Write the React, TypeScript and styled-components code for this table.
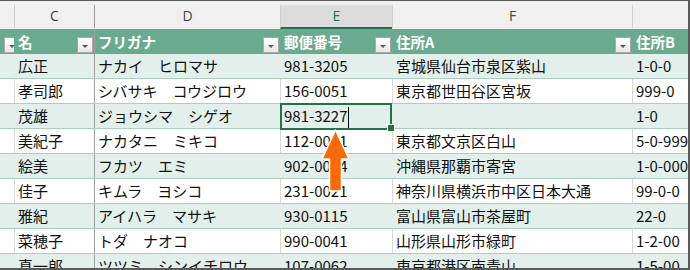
import React from "react";
import styled, { createGlobalStyle } from "styled-components";

const Global = createGlobalStyle`
  html, body { margin: 0; padding: 0; background: #ffffff; }
  * { box-sizing: border-box; }
`;

const COLS = "14px 80px 186px 112px 240px 1fr";
const JP = `"Noto Sans CJK JP", "Noto Sans", sans-serif`;

const Frame = styled.div`
  width: 690px;
  height: 270px;
  overflow: hidden;
  position: relative;
  border-top: 1px solid #5a5a5a;
  border-right: 2px solid #5a5a5a;
  border-bottom: 2px solid #5a5a5a;
  background: #ffffff;
  font-family: ${JP};
`;

const LetterRow = styled.div`
  display: grid;
  grid-template-columns: ${COLS};
  height: 28px;
  padding-top: 4px;
  background: #f0f0f0;
`;

const Letter = styled.div<{ $active?: boolean; $line: string }>`
  height: 24px;
  border-left: 1px solid ${(p) => p.$line};
  background: ${(p) => (p.$active ? "#dcdcdc" : "transparent")};
  border-bottom: 2px solid ${(p) => (p.$active ? "#217346" : "transparent")};
  color: ${(p) => (p.$active ? "#217346" : "#444444")};
  font-family: "Open Sans", "Noto Sans", sans-serif;
  font-size: 14px;
  line-height: 22px;
  text-align: center;
`;

const HeadRow = styled.div`
  display: grid;
  grid-template-columns: ${COLS};
  height: 25px;
  background: #6aaa8e;
`;

const HeadCell = styled.div<{ $line: string }>`
  display: flex;
  align-items: center;
  justify-content: space-between;
  overflow: hidden;
  border-left: 1px solid ${(p) => p.$line};
  padding-left: 3px;
  color: #ffffff;
  font-weight: bold;
  font-size: 14.5px;
  white-space: nowrap;
`;

const HeadText = styled.span`
  line-height: 24px;
`;

const FilterButton = styled.span`
  flex: none;
  align-self: flex-end;
  width: 16px;
  height: 16px;
  margin: 0 1px 1px 0;
  border: 1px solid #a9a9a9;
  background: linear-gradient(#ffffff, #e9e9e9);
  display: flex;
  align-items: center;
  justify-content: center;
  padding-top: 2px;
  &::after {
    content: "";
    width: 0;
    height: 0;
    border-left: 3px solid transparent;
    border-right: 3px solid transparent;
    border-top: 3px solid #595959;
  }
`;

const Row = styled.div<{ $band: boolean }>`
  display: grid;
  grid-template-columns: ${COLS};
  height: 25px;
  border-bottom: 1px solid #a9cfc0;
  background: ${(p) => (p.$band ? "#e2efea" : "#ffffff")};
`;

const Cell = styled.div<{ $line: string; $selected?: boolean }>`
  position: relative;
  border-left: 1px solid ${(p) => p.$line};
  padding-left: 3px;
  font-size: 15px;
  line-height: 23px;
  color: #111111;
  white-space: nowrap;
  overflow: ${(p) => (p.$selected ? "visible" : "hidden")};
  ${(p) =>
    p.$selected &&
    `
    z-index: 2;
    &::after {
      content: "";
      position: absolute;
      left: -1px;
      top: -1px;
      right: 0;
      bottom: -2px;
      border: 2px solid #217346;
      pointer-events: none;
    }
    &::before {
      content: "";
      position: absolute;
      right: -3px;
      bottom: -4px;
      width: 6px;
      height: 6px;
      background: #217346;
      border: 1px solid #ffffff;
      z-index: 3;
    }
  `}
`;

const Caret = styled.span`
  display: inline-block;
  width: 1px;
  height: 21px;
  margin-left: 1px;
  background: #000000;
  vertical-align: middle;
`;

const ArrowLayer = styled.svg`
  position: absolute;
  left: 318px;
  top: 126px;
  width: 36px;
  height: 68px;
  z-index: 5;
`;

const FREEZE = "#a0a0a0";
const GRID = "#d9d9d9";

type Rec = { c: string; d: string; e: string; f: string; g: string };

const rows: Rec[] = [
  { c: "広正", d: "ナカイ　ヒロマサ", e: "981-3205", f: "宮城県仙台市泉区紫山", g: "1-0-0" },
  { c: "孝司郎", d: "シバサキ　コウジロウ", e: "156-0051", f: "東京都世田谷区宮坂", g: "999-0" },
  { c: "茂雄", d: "ジョウシマ　シゲオ", e: "981-3227", f: "", g: "1-0" },
  { c: "美紀子", d: "ナカタニ　ミキコ", e: "112-0001", f: "東京都文京区白山", g: "5-0-999" },
  { c: "絵美", d: "フカツ　エミ", e: "902-0064", f: "沖縄県那覇市寄宮", g: "1-0-000" },
  { c: "佳子", d: "キムラ　ヨシコ", e: "231-0021", f: "神奈川県横浜市中区日本大通", g: "99-0-0" },
  { c: "雅紀", d: "アイハラ　マサキ", e: "930-0115", f: "富山県富山市茶屋町", g: "22-0" },
  { c: "菜穂子", d: "トダ　ナオコ", e: "990-0041", f: "山形県山形市緑町", g: "1-2-00" },
  { c: "真一郎", d: "ツツミ　シンイチロウ", e: "107-0062", f: "東京都港区南青山", g: "1-5-00" },
];

const headers = ["", "名", "フリガナ", "郵便番号", "住所A", "住所B"];

export default function App() {
  return (
    <>
      <Global />
      <Frame>
        <LetterRow>
          <Letter $line="transparent" />
          <Letter $line="#d0d0d0">C</Letter>
          <Letter $line={FREEZE}>D</Letter>
          <Letter $line="#d0d0d0" $active>
            E
          </Letter>
          <Letter $line="#d0d0d0">F</Letter>
          <Letter $line="#d0d0d0" />
        </LetterRow>
        <HeadRow>
          {headers.map((h, i) => (
            <HeadCell key={i} $line={i === 0 ? "transparent" : i === 2 ? FREEZE : "#6aaa8e"}>
              <HeadText>{h}</HeadText>
              {i < 5 && <FilterButton />}
            </HeadCell>
          ))}
        </HeadRow>
        {rows.map((r, i) => {
          const band = i % 2 === 0;
          const line = band ? "#e2efea" : GRID;
          const editing = i === 2;
          return (
            <Row key={i} $band={band}>
              <Cell $line="transparent" />
              <Cell $line={line}>{r.c}</Cell>
              <Cell $line={FREEZE}>{r.d}</Cell>
              <Cell $line={line} $selected={editing}>
                {r.e}
                {editing && <Caret />}
              </Cell>
              <Cell $line={line}>{r.f}</Cell>
              <Cell $line={line}>{r.g}</Cell>
            </Row>
          );
        })}
        <ArrowLayer viewBox="0 0 36 68">
          <polygon
            points="17.5,3 31,32 23.5,32 23.5,64 11.5,64 11.5,32 4,32"
            fill="#fa6a0a"
            stroke="#ffffff"
            strokeWidth="1.5"
            strokeLinejoin="round"
          />
        </ArrowLayer>
      </Frame>
    </>
  );
}
